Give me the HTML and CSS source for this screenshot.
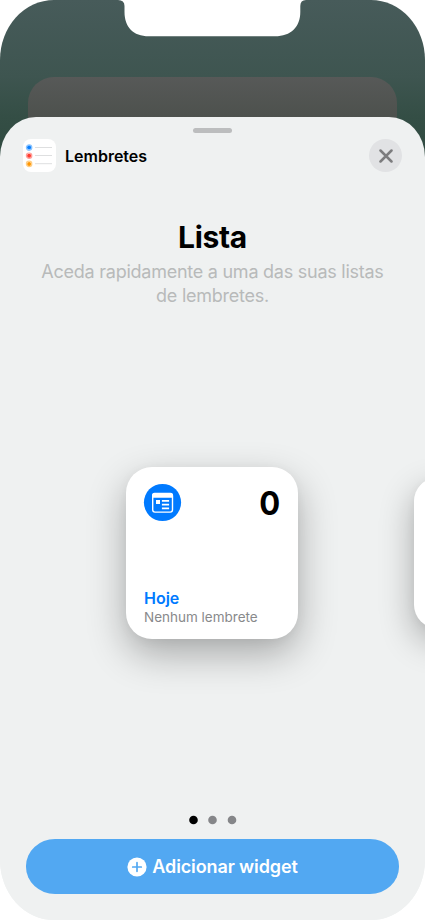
FILE: index.html
```html
<!DOCTYPE html>
<html lang="pt">
<head>
<meta charset="utf-8">
<title>Lembretes</title>
<link rel="stylesheet" href="styles.css">
</head>
<body>
<main class="phone">
  <svg class="notch" width="188" height="37" viewBox="0 0 188 37" aria-hidden="true"><path d="M0 0Q6.500 0 6.500 6V12C6.500 27 15 36.300 31 36.300H157C173 36.300 182.300 27 182.300 12V6Q182.300 0 188 0Z" fill="#fff"/></svg>
  <div class="back-card"></div>
  <section class="sheet">
    <div class="grabber"></div>
    <header class="header">
      <svg class="app-icon" width="33" height="33" viewBox="0 0 33 33" aria-hidden="true">
        <rect width="33" height="33" rx="8" fill="#fff"/>
        <g stroke="#dedfe0" stroke-width="1"><path d="M12 8.500H29M12 16.500H29M12 24.700H29"/></g>
        <g fill="none" stroke-opacity=".5" stroke-width="1.200"><circle cx="6.100" cy="8.600" r="2.700" stroke="#168aff"/><circle cx="6.100" cy="16.700" r="2.700" stroke="#ff4038"/><circle cx="6.100" cy="24.900" r="2.700" stroke="#ff9d0a"/></g>
        <circle cx="6.100" cy="8.600" r="2" fill="#087fff"/><circle cx="6.100" cy="16.700" r="2" fill="#ff3b30"/><circle cx="6.100" cy="24.900" r="2" fill="#ff9500"/>
      </svg>
      <span class="app-name">Lembretes</span>
      <button class="close" aria-label="Fechar"><svg width="14" height="14" viewBox="0 0 14 14"><path d="M1.500 1.500 12.500 12.500M12.500 1.500 1.500 12.500" stroke="#7c7c7e" stroke-width="2.500" stroke-linecap="round"/></svg></button>
    </header>
    <h1 class="title">Lista</h1>
    <p class="description">Aceda rapidamente a uma das suas listas<br>de lembretes.</p>
    <div class="gallery">
      <article class="widget">
        <div class="widget-top">
          <svg width="38" height="38" viewBox="0 0 38 38" aria-hidden="true">
            <circle cx="18.500" cy="18.500" r="18.600" fill="#007aff"/>
            <rect x="8.700" y="9.700" width="19.800" height="18.400" rx="2.300" fill="none" stroke="#fff" stroke-width="1.400"/>
            <path d="M8 13.700V11.200Q8 8.700 10.500 8.700H26.500Q29 8.700 29 11.200V13.700Z" fill="#fff"/>
            <path d="M12 16h4v4h-4z" fill="#fff"/>
            <path d="M17.900 16.900H25.100M17.900 20.600H25.100M17.900 24.300H25.100" stroke="#fff" stroke-width="1.700"/>
          </svg>
          <span class="count">0</span>
        </div>
        <div class="widget-name">Hoje</div>
        <div class="widget-note">Nenhum lembrete</div>
      </article>
      <article class="widget-next"></article>
    </div>
    <svg class="dots" width="49" height="10" viewBox="0 0 49 10" aria-hidden="true"><circle cx="5.500" cy="5" r="4.300" fill="#000"/><circle cx="24.500" cy="5" r="4.300" fill="#858689"/><circle cx="44" cy="5" r="4.300" fill="#858689"/></svg>
    <button class="add">
      <svg width="20" height="20" viewBox="0 0 20 20" aria-hidden="true"><circle cx="10" cy="10" r="9.600" fill="#fff"/><path d="M10 5.700V14.300M5.700 10H14.300" stroke="#52a8f2" stroke-width="1.700" stroke-linecap="round"/></svg>
      <span class="add-label">Adicionar widget</span>
    </button>
  </section>
</main>
</body>
</html>
```
FILE: styles.css
```css
* { box-sizing: border-box; }
body { margin: 0; background: #fff; font-family: Inter, "Liberation Sans", sans-serif; color: #000; }
h1, p { margin: 0; }
button { border: 0; padding: 0; font: inherit; }
svg { display: block; flex: none; }
.phone { position: relative; width: 425px; height: 920px; padding-top: 77px; overflow: hidden; border-radius: 54px / 60px; background: linear-gradient(#475b5a 0, #3e5550 77px, #344e45 117px, #2f493f 165px, #eff1f1 165px); }
.notch { position: absolute; top: 0; left: 118px; }
.back-card { height: 80px; margin: 0 28px; border-radius: 26px; background: linear-gradient(#575958, #4d514d 40px); }
.sheet { position: relative; height: 803px; margin-top: -40px; padding-top: 11px; border-radius: 36px 36px 0 0 / 40px 40px 0 0; background: #eff1f1; display: flex; flex-direction: column; overflow: hidden; }
.grabber { flex: none; width: 39px; height: 5px; margin: 0 auto; border-radius: 3px; background: #bcbdbe; }
.header { display: flex; align-items: center; height: 33px; margin-top: 6px; padding: 0 23px; }
.app-name { margin-left: 9px; font-size: 16px; font-weight: 600; }
.close { display: grid; place-items: center; width: 33px; height: 33px; margin-left: auto; border-radius: 50%; background: #e1e2e4; }
.title { margin-top: 47px; text-align: center; font-size: 30px; line-height: 36px; font-weight: 700; letter-spacing: -.3px; }
.description { margin-top: 5px; text-align: center; font-size: 18px; line-height: 24px; letter-spacing: -.25px; color: #b8baba; }
.gallery { display: flex; align-items: center; height: 172px; margin: 159px 0 0 126.400px; }
.widget { flex: none; display: flex; flex-direction: column; width: 172px; height: 172px; padding: 17px 18px 0 17.600px; border-radius: 26px; background: #fff; box-shadow: 0 15px 38px rgba(0, 0, 0, .3), 0 2px 12px rgba(0, 0, 0, .04); }
.widget-top { display: flex; align-items: center; height: 38px; }
.widget-top svg { overflow: visible; }
.count { margin-left: auto; font-size: 33px; line-height: 38px; font-weight: 700; transform: scaleX(.94); transform-origin: right; }
.widget-name { margin-top: 66px; font-size: 16px; line-height: 20px; font-weight: 600; color: #007aff; }
.widget-note { font-size: 13.500px; line-height: 19px; color: #88898b; white-space: nowrap; }
.widget-next { flex: none; width: 150px; height: 150px; margin-left: 115.600px; border-radius: 23px; background: #fff; box-shadow: 0 13px 34px rgba(0, 0, 0, .3), 0 2px 10px rgba(0, 0, 0, .04); }
.dots { margin: 176px auto 0; }
.add { flex: none; display: flex; align-items: center; justify-content: center; gap: 5px; height: 55px; margin: 14px 26px 0; border-radius: 29px / 27px; background: #52a8f2; color: #fff; }
.add-label { font-size: 18px; font-weight: 600; letter-spacing: -.12px; }
```
